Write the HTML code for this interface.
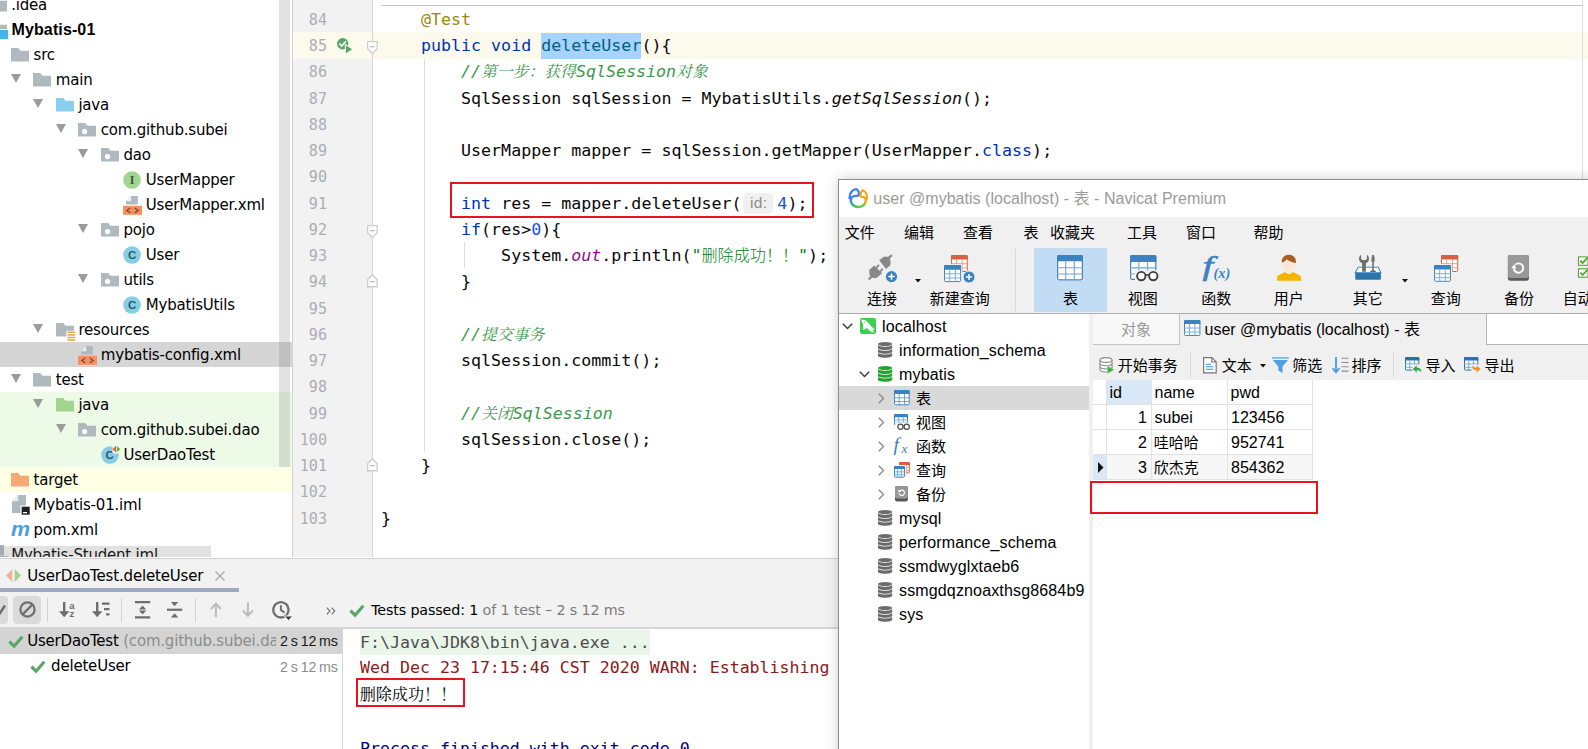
<!DOCTYPE html>
<html lang="zh"><head><meta charset="utf-8"><title>IDEA + Navicat</title>
<style>
html,body{margin:0;padding:0}
body{width:1588px;height:749px;overflow:hidden;position:relative;background:#fff;color:#000;
 font-family:"Liberation Sans","Noto Sans CJK SC",sans-serif;font-size:16px}
.abs{position:absolute}
svg{position:absolute;overflow:visible}
#tree{position:absolute;left:0;top:0;width:293px;height:557px;overflow:hidden;background:#fff}
.tr{position:absolute;left:0;width:291.500px;height:25px;line-height:25px;white-space:nowrap;font-family:"DejaVu Sans","Liberation Sans","Noto Sans CJK SC",sans-serif;font-size:15px;letter-spacing:-.2px}
.tr span{position:absolute;top:1.1px}
.ar{position:absolute;width:0;height:0;border-left:5.600px solid transparent;border-right:5.600px solid transparent;border-top:9.600px solid #9b9b9b;top:6.900px}
#ed{position:absolute;left:293px;top:0;width:1295px;height:557px;overflow:hidden;background:#fff}
#gut{position:absolute;left:0;top:0;width:79px;height:558px;background:#f2f2f2;border-right:1px solid #d6d6d6}
.ln{position:absolute;left:0;width:34px;font-size:15.1px;text-align:right;color:#adadb5;height:26.26px;line-height:26.26px}
.cl{position:absolute;left:87.9px;height:26.26px;line-height:26.26px;white-space:pre;color:#080808}
.mono{font-family:"DejaVu Sans Mono","Liberation Mono","Noto Sans CJK SC",monospace;font-size:16.65px}
.kw{color:#0033b3}.an{color:#9e880d}.cm{color:#3a9a4a;font-style:italic}.st{color:#067d17}.nu{color:#1750eb}
.sf{color:#871094;font-style:italic}.it{font-style:italic}
.sel{background:#a6d2ff;color:#00627a;display:inline-block;height:26.26px}
.cjk{font-family:"Noto Serif CJK SC","Noto Sans CJK SC",serif;font-size:15.8px;line-height:1px}
.cjs{font-family:"Noto Sans CJK SC",sans-serif;font-size:16.1px;font-weight:300;line-height:1px}
.hint{display:inline-block;font-family:"Liberation Sans",sans-serif;font-size:15.5px;letter-spacing:.3px;color:#8c8c8c;background:#f0f0f0;border-radius:4.5px;height:21px;line-height:20px;padding:0 6.2px 0 6.6px;margin:0 4px 0 1.8px;vertical-align:.5px;width:17.2px}
#bot{position:absolute;left:0;width:1588px;height:192px;overflow:hidden}
#nav{position:absolute;width:760px;height:580px;border:1px solid #8c8c8c;box-sizing:border-box;box-shadow:0 0 12px rgba(0,0,0,.2);overflow:hidden;background:#fff;font-family:"Liberation Sans","Noto Sans CJK SC",sans-serif}

</style></head><body>
<div id="tree">
<div class="tr" style="top:-8px;"><svg width="18" height="14" viewBox="0 0 18 14" style="left:-11.4px;top:5.5px"><path d="M0 0h7.2l2.3 2.8h8.5v10.7h-18z" fill="#aeb9c0"/></svg><span style="left:11.2px;">.idea</span></div>
<div class="tr" style="top:17px;"><svg width="18" height="16" viewBox="0 0 18 16" style="left:-11.4px;top:5px"><path d="M0 0h7.2l2.3 2.8h8.5v10.7h-18z" fill="#aeb9c0"/><rect x="9" y="7" width="10" height="10" fill="#fff"/><rect x="10" y="8" width="9" height="9" fill="#3fb6e8"/></svg><span style="left:11.2px;font:bold 16px/25px Liberation Sans,sans-serif;letter-spacing:.12px;left:11.500px;top:0;">Mybatis-01</span></div>
<div class="tr" style="top:42px;"><svg width="18" height="14" viewBox="0 0 18 14" style="left:11.0px;top:5.5px"><path d="M0 0h7.2l2.3 2.8h8.5v10.7h-18z" fill="#aeb9c0"/></svg><span style="left:33.6px;">src</span></div>
<div class="tr" style="top:67px;"><i class="ar" style="left:10.5px"></i><svg width="18" height="14" viewBox="0 0 18 14" style="left:33.2px;top:5.5px"><path d="M0 0h7.2l2.3 2.8h8.5v10.7h-18z" fill="#aeb9c0"/></svg><span style="left:55.8px;">main</span></div>
<div class="tr" style="top:92px;"><i class="ar" style="left:33.1px"></i><svg width="18" height="14" viewBox="0 0 18 14" style="left:55.8px;top:5.5px"><path d="M0 0h7.2l2.3 2.8h8.5v10.7h-18z" fill="#87d0f0"/></svg><span style="left:78.4px;">java</span></div>
<div class="tr" style="top:117px;"><i class="ar" style="left:55.5px"></i><svg width="18" height="14" viewBox="0 0 18 14" style="left:78.2px;top:5.5px"><path d="M0 0h7.2l2.3 2.8h8.5v10.7h-18z" fill="#aeb9c0"/><circle cx="6.6" cy="8.6" r="2.6" fill="#fff"/></svg><span style="left:100.8px;">com.github.subei</span></div>
<div class="tr" style="top:142px;"><i class="ar" style="left:78.1px"></i><svg width="18" height="14" viewBox="0 0 18 14" style="left:100.8px;top:5.5px"><path d="M0 0h7.2l2.3 2.8h8.5v10.7h-18z" fill="#aeb9c0"/><circle cx="6.6" cy="8.6" r="2.6" fill="#fff"/></svg><span style="left:123.4px;">dao</span></div>
<div class="tr" style="top:167px;"><svg width="18" height="18" viewBox="0 0 18 18" style="left:123.2px;top:3.5px"><circle cx="9" cy="9" r="8.8" fill="#a2d592"/><text x="9" y="13.2" text-anchor="middle" font-family="Liberation Serif,serif" font-weight="bold" font-size="12" fill="#3d5a3c">I</text></svg><span style="left:145.8px;">UserMapper</span></div>
<div class="tr" style="top:192px;"><svg width="19" height="19" viewBox="0 0 19 19" style="left:123.2px;top:3.5px"><path d="M3 8.5V5.2L8.2 0H14.8V8.5z" fill="#aeb9c0"/><path d="M3 5.2L8.2 0V5.2z" fill="#fff" opacity=".75"/><rect x="0" y="9.8" width="19" height="9" fill="#f4905f"/><path d="M7.300 11.900L3.800 14.400l3.500 2.500M11.700 11.900l3.500 2.500-3.500 2.500" fill="none" stroke="#6b3a22" stroke-width="1.100"/></svg><span style="left:145.8px;">UserMapper.xml</span></div>
<div class="tr" style="top:217px;"><i class="ar" style="left:78.1px"></i><svg width="18" height="14" viewBox="0 0 18 14" style="left:100.8px;top:5.5px"><path d="M0 0h7.2l2.3 2.8h8.5v10.7h-18z" fill="#aeb9c0"/><circle cx="6.6" cy="8.6" r="2.6" fill="#fff"/></svg><span style="left:123.4px;">pojo</span></div>
<div class="tr" style="top:242px;"><svg width="18" height="18" viewBox="0 0 18 18" style="left:123.2px;top:3.5px"><circle cx="9" cy="9" r="8.8" fill="#86cde6"/><text x="9" y="13" text-anchor="middle" font-family="Liberation Sans,sans-serif" font-weight="bold" font-size="11.5" fill="#2f5a6c">C</text></svg><span style="left:145.8px;">User</span></div>
<div class="tr" style="top:267px;"><i class="ar" style="left:78.1px"></i><svg width="18" height="14" viewBox="0 0 18 14" style="left:100.8px;top:5.5px"><path d="M0 0h7.2l2.3 2.8h8.5v10.7h-18z" fill="#aeb9c0"/><circle cx="6.6" cy="8.6" r="2.6" fill="#fff"/></svg><span style="left:123.4px;">utils</span></div>
<div class="tr" style="top:292px;"><svg width="18" height="18" viewBox="0 0 18 18" style="left:123.2px;top:3.5px"><circle cx="9" cy="9" r="8.8" fill="#86cde6"/><text x="9" y="13" text-anchor="middle" font-family="Liberation Sans,sans-serif" font-weight="bold" font-size="11.5" fill="#2f5a6c">C</text></svg><span style="left:145.8px;">MybatisUtils</span></div>
<div class="tr" style="top:317px;"><i class="ar" style="left:33.1px"></i><svg width="18" height="14" viewBox="0 0 18 14" style="left:55.8px;top:5.5px"><path d="M0 0h7.2l2.3 2.8h8.5v10.7h-18z" fill="#aeb9c0"/><rect x="10.400" y="7.800" width="9" height="10" fill="#fff"/><path d="M11.400 9.300h7.900M11.400 11.900h7.900M11.400 14.500h7.900M11.400 17.100h7.900" stroke="#e0a94a" stroke-width="1.500"/></svg><span style="left:78.4px;">resources</span></div>
<div class="tr" style="top:342px;background:#d5d5d5;"><svg width="19" height="19" viewBox="0 0 19 19" style="left:78.2px;top:3.5px"><path d="M3 8.5V5.2L8.2 0H14.8V8.5z" fill="#aeb9c0"/><path d="M3 5.2L8.2 0V5.2z" fill="#fff" opacity=".75"/><rect x="0" y="9.8" width="19" height="9" fill="#f4905f"/><path d="M7.300 11.900L3.800 14.400l3.500 2.500M11.700 11.900l3.500 2.500-3.500 2.500" fill="none" stroke="#6b3a22" stroke-width="1.100"/></svg><span style="left:100.8px;">mybatis-config.xml</span></div>
<div class="tr" style="top:367px;"><i class="ar" style="left:10.5px"></i><svg width="18" height="14" viewBox="0 0 18 14" style="left:33.2px;top:5.5px"><path d="M0 0h7.2l2.3 2.8h8.5v10.7h-18z" fill="#aeb9c0"/></svg><span style="left:55.8px;">test</span></div>
<div class="tr" style="top:392px;background:#eefae8;"><i class="ar" style="left:33.1px"></i><svg width="18" height="14" viewBox="0 0 18 14" style="left:55.8px;top:5.5px"><path d="M0 0h7.2l2.3 2.8h8.5v10.7h-18z" fill="#a3d48e"/></svg><span style="left:78.4px;">java</span></div>
<div class="tr" style="top:417px;background:#eefae8;"><i class="ar" style="left:55.5px"></i><svg width="18" height="14" viewBox="0 0 18 14" style="left:78.2px;top:5.5px"><path d="M0 0h7.2l2.3 2.8h8.5v10.7h-18z" fill="#aeb9c0"/><circle cx="6.6" cy="8.6" r="2.6" fill="#fff"/></svg><span style="left:100.8px;">com.github.subei.dao</span></div>
<div class="tr" style="top:442px;background:#eefae8;"><svg width="20" height="19" viewBox="0 0 20 19" style="left:100.8px;top:2.5px"><circle cx="9" cy="10" r="8.8" fill="#86cde6"/><text x="8.6" y="14" text-anchor="middle" font-family="Liberation Sans,sans-serif" font-weight="bold" font-size="11.5" fill="#2f5a6c">C</text><path d="M11.5 0.5h6.5v8h-6.5z" fill="#fff"/><path d="M15.6 0.8l3.8 3.4-3.8 3.4z" fill="#62b543"/><path d="M15 0.8l-3.8 3.4 3.8 3.4z" fill="#e8673c"/></svg><span style="left:123.4px;">UserDaoTest</span></div>
<div class="tr" style="top:467px;background:#ffffe6;"><svg width="18" height="14" viewBox="0 0 18 14" style="left:11.0px;top:5.5px"><path d="M0 0h7.2l2.3 2.8h8.5v10.7h-18z" fill="#f6a972"/></svg><span style="left:33.6px;">target</span></div>
<div class="tr" style="top:492px;"><svg width="19" height="20" viewBox="0 0 19 20" style="left:11.0px;top:2.5px"><path d="M1 18V6.2L7.2 0H15V18z" fill="#aeb9c0"/><path d="M1 6.2L7.2 0V6.2z" fill="#fff" opacity=".7"/><rect x="9.5" y="10.5" width="9.5" height="9.5" fill="#fff"/><rect x="10.7" y="11.7" width="8" height="8" fill="#1f1f1f"/><rect x="12" y="17" width="4" height="1.3" fill="#fff"/></svg><span style="left:33.6px;">Mybatis-01.iml</span></div>
<div class="tr" style="top:517px;"><span style="left:11.0px;top:-1px;font:italic bold 21px/25px 'Liberation Sans',sans-serif;color:#4a9fdc;transform:scaleX(1.02);transform-origin:left">m</span><span style="left:33.6px;">pom.xml</span></div>
<div class="tr" style="top:542px;"><svg width="19" height="20" viewBox="0 0 19 20" style="left:-11.4px;top:2.5px"><path d="M1 18V6.2L7.2 0H15V18z" fill="#aeb9c0"/><path d="M1 6.2L7.2 0V6.2z" fill="#fff" opacity=".7"/><rect x="9.5" y="10.5" width="9.5" height="9.5" fill="#fff"/><rect x="10.7" y="11.7" width="8" height="8" fill="#1f1f1f"/><rect x="12" y="17" width="4" height="1.3" fill="#fff"/></svg><span style="left:11.2px;">Mybatis-Student.iml</span></div>
<div class="abs" style="left:279px;top:-5px;width:10.900px;height:472px;background:rgba(110,110,110,.2)"></div>
<div class="abs" style="left:291.700px;top:0;width:1.300px;height:558px;background:#d2d2d2"></div>
<div class="abs" style="left:0;top:545.5px;width:211px;height:11.5px;background:rgba(120,120,120,.22)"></div>
</div>
<div id="ed" class="mono">
<div class="abs" style="left:0;top:32px;width:1295px;height:26.5px;background:#fcfaed"></div>
<div id="gut"></div>
<div class="abs" style="left:0;top:32px;width:79px;height:26.5px;background:#fcfaed"></div>
<div class="abs" style="left:88px;top:4.5px;width:1201px;height:1.3px;background:#c4c4c4"></div>
<div class="abs" style="left:1288.5px;top:0;width:1.2px;height:180px;background:#dcdcdc"></div>
<div class="abs" style="left:131.2px;top:58.5px;width:1.2px;height:393.7px;background:#dedede"></div>
<div class="abs" style="left:171.2px;top:242.1px;width:1.2px;height:26.3px;background:#dedede"></div>
<div class="ln" style="top:6.74px">84</div>
<div class="cl" style="top:6.74px">    <span class="an">@Test</span></div>
<div class="ln" style="top:33.00px">85</div>
<div class="cl" style="top:33.00px">    <span class="kw">public void</span> <span class="sel">deleteUser</span>(){</div>
<div class="ln" style="top:59.26px">86</div>
<div class="cl" style="top:59.26px">        <span class="cm">//<span class="cjk">第一步：获得</span>SqlSession<span class="cjk">对象</span></span></div>
<div class="ln" style="top:85.52px">87</div>
<div class="cl" style="top:85.52px">        SqlSession sqlSession = MybatisUtils.<span class="it">getSqlSession</span>();</div>
<div class="ln" style="top:111.78px">88</div>
<div class="ln" style="top:138.04px">89</div>
<div class="cl" style="top:138.04px">        UserMapper mapper = sqlSession.getMapper(UserMapper.<span class="kw">class</span>);</div>
<div class="ln" style="top:164.30px">90</div>
<div class="ln" style="top:190.56px">91</div>
<div class="cl" style="top:190.56px">        <span class="kw">int</span> res = mapper.deleteUser(<span class="hint">id:</span><span class="nu">4</span>);</div>
<div class="ln" style="top:216.82px">92</div>
<div class="cl" style="top:216.82px">        <span class="kw">if</span>(res&gt;<span class="nu">0</span>){</div>
<div class="ln" style="top:243.08px">93</div>
<div class="cl" style="top:243.08px">            System.<span class="sf">out</span>.println(<span class="st">"<span class="cjs">删除成功！！</span>"</span>);</div>
<div class="ln" style="top:269.34px">94</div>
<div class="cl" style="top:269.34px">        }</div>
<div class="ln" style="top:295.60px">95</div>
<div class="ln" style="top:321.86px">96</div>
<div class="cl" style="top:321.86px">        <span class="cm">//<span class="cjk">提交事务</span></span></div>
<div class="ln" style="top:348.12px">97</div>
<div class="cl" style="top:348.12px">        sqlSession.commit();</div>
<div class="ln" style="top:374.38px">98</div>
<div class="ln" style="top:400.64px">99</div>
<div class="cl" style="top:400.64px">        <span class="cm">//<span class="cjk">关闭</span>SqlSession</span></div>
<div class="ln" style="top:426.90px">100</div>
<div class="cl" style="top:426.90px">        sqlSession.close();</div>
<div class="ln" style="top:453.16px">101</div>
<div class="cl" style="top:453.16px">    }</div>
<div class="ln" style="top:479.42px">102</div>
<div class="ln" style="top:505.68px">103</div>
<div class="cl" style="top:505.68px">}</div>
<svg width="16" height="16" viewBox="0 0 16 16" style="left:43.9px;top:37.7px"><circle cx="5.700" cy="5.700" r="5.700" fill="#59a869"/><path d="M2.300 5.500l2.400 2.500 4.300-4.600" fill="none" stroke="#fff" stroke-width="1.700"/><path d="M7.800 5.800v10.400l8.400-5.200z" fill="#fcfaed"/><path d="M8.900 7.400v7.800l6.300-3.900z" fill="#59a869"/></svg>
<svg width="11" height="14" viewBox="0 0 11 14" style="left:74.1px;top:40.8px"><path d="M.65 .65h9.500v7l-4.750 5-4.750-5z" fill="#fff" stroke="#cdcdcd" stroke-width="1.300"/><path d="M3 5.700h4.800" stroke="#b0b0b0" stroke-width="1.100"/></svg>
<svg width="11" height="14" viewBox="0 0 11 14" style="left:74.1px;top:225.0px"><path d="M.65 .65h9.500v7l-4.750 5-4.750-5z" fill="#fff" stroke="#cdcdcd" stroke-width="1.300"/><path d="M3 5.700h4.800" stroke="#b0b0b0" stroke-width="1.100"/></svg>
<svg width="11" height="14" viewBox="0 0 11 14" style="left:74.1px;top:274.0px"><path d="M.65 12.750h9.500v-7l-4.750-5-4.750 5z" fill="#fff" stroke="#cdcdcd" stroke-width="1.300"/><path d="M3 7.700h4.800" stroke="#b0b0b0" stroke-width="1.100"/></svg>
<svg width="11" height="14" viewBox="0 0 11 14" style="left:74.1px;top:457.9px"><path d="M.65 12.750h9.500v-7l-4.750-5-4.750 5z" fill="#fff" stroke="#cdcdcd" stroke-width="1.300"/><path d="M3 7.700h4.800" stroke="#b0b0b0" stroke-width="1.100"/></svg>
<div class="abs" style="left:157px;top:181.900px;width:360px;height:32.600px;border:2px solid #e8141f"></div>
</div>
<div id="bot" style="top:558px">
<div class="abs" style="left:0.0px;top:-0.3px;width:1588.0px;height:70.0px;background:#f2f2f2"></div>
<div class="abs" style="left:0.0px;top:0.0px;width:1588.0px;height:1.1px;background:#d2d2d2"></div>
<svg width="15" height="13" viewBox="0 0 15 13" style="left:5.8px;top:11.0px"><path d="M6.3 0v13L0 6.500z" fill="#f2b197"/><path d="M8.700 0v13L15 6.500z" fill="#a5d38f"/></svg>
<div class="abs " style="left:27.2px;top:4.6px;height:26px;line-height:26px;font-size:15px;color:#000;white-space:pre;font-family:'DejaVu Sans','Liberation Sans',sans-serif;letter-spacing:-.17px;">UserDaoTest.deleteUser</div>
<svg width="10" height="10" viewBox="0 0 10 10" style="left:215.0px;top:13.0px"><path d="M.5 .5l9 9M9.500 .5l-9 9" stroke="#a6a6a6" stroke-width="1.200"/></svg>
<div class="abs" style="left:0.0px;top:30.3px;width:238.5px;height:3.6px;background:#9da8c3"></div>
<div class="abs" style="left:-6.0px;top:38.0px;width:14.2px;height:27.8px;border-radius:4px;background:#dadada"></div>
<svg width="8" height="12" viewBox="0 0 8 12" style="left:0.0px;top:45.0px"><path d="M-3 7l3 3 5-7.500" fill="none" stroke="#6e6e6e" stroke-width="2.600"/></svg>
<div class="abs" style="left:13.2px;top:38.0px;width:27.7px;height:27.8px;border-radius:4.500px;background:#dadada"></div>
<svg width="17" height="17" viewBox="0 0 17 17" style="left:18.6px;top:43.4px"><circle cx="8.500" cy="8.500" r="7.100" fill="none" stroke="#6e6e6e" stroke-width="2.200"/><path d="M3.600 13.400L13.400 3.600" stroke="#6e6e6e" stroke-width="2.200"/></svg>
<div class="abs" style="left:47.0px;top:40.2px;width:1.2px;height:23.5px;background:#d2d2d2"></div>
<svg width="18" height="16" viewBox="0 0 18 16" style="left:59.3px;top:44.0px"><path d="M5.200 0v10.500" stroke="#6e6e6e" stroke-width="2.400"/><path d="M0 9.300h10.400L5.200 15.200z" fill="#6e6e6e"/><text x="10.300" y="6.700" font-family="Liberation Sans,sans-serif" font-weight="bold" font-size="9.500" fill="#6e6e6e">a</text><text x="10.600" y="15.200" font-family="Liberation Sans,sans-serif" font-weight="bold" font-size="9.500" fill="#6e6e6e">z</text></svg>
<svg width="18" height="16" viewBox="0 0 18 16" style="left:92.3px;top:44.0px"><path d="M5.200 0v10.500" stroke="#6e6e6e" stroke-width="2.400"/><path d="M0 9.300h10.400L5.200 15.200z" fill="#6e6e6e"/><path d="M10 1.600h7.500M12 7.200h5.500M14.100 12.400h3.400" stroke="#6e6e6e" stroke-width="2.300"/></svg>
<div class="abs" style="left:120.8px;top:40.2px;width:1.2px;height:23.5px;background:#d2d2d2"></div>
<svg width="15.2" height="17.5" viewBox="0 0 15.2 17.5" style="left:134.5px;top:43.2px"><path d="M0 1.100h15.200M0 16.400h15.200" stroke="#6e6e6e" stroke-width="2.200"/><path d="M3.900 8.400l3.700-3.900 3.700 3.900zM3.900 9.600l3.700 3.900 3.700-3.900z" fill="#6e6e6e"/></svg>
<svg width="15.2" height="17.5" viewBox="0 0 15.2 17.5" style="left:167.4px;top:43.2px"><path d="M0 8.750h15.200" stroke="#6e6e6e" stroke-width="2.200"/><path d="M3.900 1.100l3.700 4.100 3.700-4.100zM3.900 16.400l3.700-4.100 3.700 4.100z" fill="#6e6e6e"/></svg>
<div class="abs" style="left:195.0px;top:40.2px;width:1.2px;height:23.5px;background:#d2d2d2"></div>
<svg width="12" height="15.5" viewBox="0 0 12 15.5" style="left:210.0px;top:44.4px"><path d="M5.900 15.200V1.800M.8 6.900l5.100-5.100L11 6.900" fill="none" stroke="#bdbdbd" stroke-width="2.100"/></svg>
<svg width="12" height="15.5" viewBox="0 0 12 15.5" style="left:242.1px;top:44.4px"><path d="M5.900 .3v13.400M.8 8.600l5.100 5.100L11 8.600" fill="none" stroke="#bdbdbd" stroke-width="2.100"/></svg>
<svg width="20" height="20" viewBox="0 0 20 20" style="left:272.0px;top:43.4px"><circle cx="8.900" cy="8.800" r="7.700" fill="none" stroke="#6e6e6e" stroke-width="2.300"/><path d="M8.900 4.200v4.800l3.600 2.600" fill="none" stroke="#6e6e6e" stroke-width="2"/><path d="M12.400 15h8.200l-4.100 4.600z" fill="#3a3a3a" stroke="#f2f2f2" stroke-width="1"/></svg>
<svg width="10" height="8" viewBox="0 0 10 8" style="left:326.4px;top:48.6px"><path d="M.8 .6l3.200 3.400L.8 7.400M5.600 .6l3.200 3.400-3.200 3.400" fill="none" stroke="#6e6e6e" stroke-width="1.100"/></svg>
<svg width="16" height="13" viewBox="0 0 16 13" style="left:348.5px;top:45.6px"><path d="M1.400 6.600l4.700 4.600L14.300 1.700" fill="none" stroke="#59a869" stroke-width="3.200"/></svg>
<div class="abs " style="left:371.2px;top:38.5px;height:26px;line-height:26px;font-size:14.3px;color:#000;white-space:pre;font-family:'DejaVu Sans','Liberation Sans',sans-serif;letter-spacing:-.15px;">Tests passed: 1 <span style="color:#7b7b7b">of 1 test – 2 s 12 ms</span></div>
<div class="abs" style="left:0.0px;top:69.2px;width:1588.0px;height:125.0px;background:#fff"></div>
<div class="abs" style="left:0.0px;top:69.0px;width:1588.0px;height:1.8px;background:#d6d6d6"></div>
<div class="abs" style="left:0.0px;top:69.2px;width:341.8px;height:26.6px;background:#d4d4d4"></div>
<svg width="16" height="13" viewBox="0 0 16 13" style="left:7.6px;top:76.8px"><path d="M1.400 6.600l4.700 4.600L14.300 1.700" fill="none" stroke="#59a869" stroke-width="3.200"/></svg>
<svg width="16" height="13" viewBox="0 0 16 13" style="left:29.6px;top:102.0px"><path d="M1.400 6.600l4.700 4.600L14.300 1.700" fill="none" stroke="#59a869" stroke-width="3.200"/></svg>
<div class="abs " style="left:27.2px;top:70.3px;height:26px;line-height:26px;font-size:15px;color:#000;white-space:pre;font-family:'DejaVu Sans','Liberation Sans',sans-serif;width:248.700px;overflow:hidden;letter-spacing:-.2px;">UserDaoTest <span style="color:#8c8c8c">(com.github.subei.dao)</span></div>
<div class="abs " style="left:240.0px;top:69.8px;height:26px;line-height:26px;font-size:14.2px;color:#1a1a1a;white-space:pre;word-spacing:-.9px;letter-spacing:-.12px;width:97.8px;text-align:right;">2 s 12 ms</div>
<div class="abs " style="left:51.1px;top:95.0px;height:26px;line-height:26px;font-size:15px;color:#000;white-space:pre;font-family:'DejaVu Sans','Liberation Sans',sans-serif;letter-spacing:-.2px;">deleteUser</div>
<div class="abs " style="left:240.0px;top:95.8px;height:26px;line-height:26px;font-size:14.2px;color:#8c8c8c;white-space:pre;word-spacing:-.9px;letter-spacing:-.12px;width:97.8px;text-align:right;">2 s 12 ms</div>
<div class="abs" style="left:341.8px;top:69.2px;width:1.3px;height:125.0px;background:#d4d4d4"></div>
<div class="abs mono" style="left:360.0px;top:71.0px;height:26px;line-height:26px;font-size:16.6px;color:#4d4d4d;white-space:pre;background:#ebf6ea;height:25px;line-height:25px;margin-top:.500px;">F:\Java\JDK8\bin\java.exe ...</div>
<div class="abs mono" style="left:360.0px;top:97.4px;height:26px;line-height:26px;font-size:16.6px;color:#8b1a1a;white-space:pre;">Wed Dec 23 17:15:46 CST 2020 WARN: Establishing SSL connection</div>
<div class="abs " style="left:359.7px;top:122.4px;height:26px;line-height:26px;font-size:16.1px;color:#000;white-space:pre;font-family:'Noto Serif CJK SC','Noto Sans CJK SC',serif;">删除成功！！</div>
<div class="abs mono" style="left:360.0px;top:178.1px;height:26px;line-height:26px;font-size:16.6px;color:#00007f;white-space:pre;">Process finished with exit code 0</div>
<div class="abs" style="left:356.2px;top:119.9px;width:104.8px;height:25.5px;border:2px solid #e8141f"></div>
</div>
<div id="nav" style="left:838px;top:179px">
<div class="abs " style="left:0.0px;top:0.0px;width:760.0px;height:36.8px;background:#fff"></div>
<svg width="22" height="22" viewBox="847 187 22 22" style="left:8.0px;top:7.0px"><defs><linearGradient id="ngl" x1="0" y1="0" x2="0" y2="1"><stop offset="0" stop-color="#3b7df6"/><stop offset=".45" stop-color="#3b8ee0"/><stop offset="1" stop-color="#3fd23f"/></linearGradient><linearGradient id="ngr" x1="0" y1="0" x2="0" y2="1"><stop offset="0" stop-color="#fba40f"/><stop offset=".45" stop-color="#d8b41e"/><stop offset="1" stop-color="#3fd23f"/></linearGradient></defs><path d="M858.2 207A7.400 6.300 0 0 1 851.600 198" fill="none" stroke="url(#ngl)" stroke-width="2.300"/><path d="M858.2 207A7.400 6.300 0 0 0 865.300 198.500" fill="none" stroke="url(#ngr)" stroke-width="2.300"/><path d="M849.500 198.200C849.100 192.800 852.800 189.200 856.400 189.200C858.400 190.500 859.300 193 858.500 195.600C854.700 195.500 851.600 196.800 849.500 198.200z" fill="#fff" stroke="#3b7df6" stroke-width="2.200" stroke-linejoin="round"/><path d="M860.600 194C861 191.800 862 190.500 863.100 190.400C865.800 191.600 867.400 195.300 866.900 198.800C865 197.400 862.700 196.600 860.600 196.300z" fill="#fff" stroke="#fba40f" stroke-width="2.200" stroke-linejoin="round"/></svg>
<div class="abs" style="left:34.3px;top:6.7px;height:24px;line-height:24px;font-size:16px;color:#9b9b9b;white-space:nowrap;letter-spacing:.03px;">user @mybatis (localhost) - 表 - Navicat Premium</div>
<div class="abs " style="left:0.0px;top:36.8px;width:760.0px;height:96.4px;background:#f0f0f0"></div>
<div class="abs" style="left:5.7px;top:41.3px;height:24px;line-height:24px;font-size:15px;color:#000;white-space:nowrap;">文件</div>
<div class="abs" style="left:65.0px;top:41.3px;height:24px;line-height:24px;font-size:15px;color:#000;white-space:nowrap;">编辑</div>
<div class="abs" style="left:124.0px;top:41.3px;height:24px;line-height:24px;font-size:15px;color:#000;white-space:nowrap;">查看</div>
<div class="abs" style="left:184.5px;top:41.3px;height:24px;line-height:24px;font-size:15px;color:#000;white-space:nowrap;">表</div>
<div class="abs" style="left:211.0px;top:41.3px;height:24px;line-height:24px;font-size:15px;color:#000;white-space:nowrap;">收藏夹</div>
<div class="abs" style="left:288.0px;top:41.3px;height:24px;line-height:24px;font-size:15px;color:#000;white-space:nowrap;">工具</div>
<div class="abs" style="left:347.0px;top:41.3px;height:24px;line-height:24px;font-size:15px;color:#000;white-space:nowrap;">窗口</div>
<div class="abs" style="left:414.5px;top:41.3px;height:24px;line-height:24px;font-size:15px;color:#000;white-space:nowrap;">帮助</div>
<div class="abs " style="left:195.2px;top:67.8px;width:72.7px;height:63.8px;background:#c1dcf3"></div>
<div class="abs " style="left:176.0px;top:69.0px;width:1.2px;height:61.5px;background:#dadada"></div>
<div class="abs" style="left:3.0px;top:106.8px;height:24px;line-height:24px;font-size:15px;color:#000;white-space:nowrap;width:80px;text-align:center;">连接</div>
<div class="abs" style="left:80.8px;top:106.8px;height:24px;line-height:24px;font-size:15px;color:#000;white-space:nowrap;width:80px;text-align:center;">新建查询</div>
<div class="abs" style="left:191.5px;top:106.8px;height:24px;line-height:24px;font-size:15px;color:#000;white-space:nowrap;width:80px;text-align:center;">表</div>
<div class="abs" style="left:263.8px;top:106.8px;height:24px;line-height:24px;font-size:15px;color:#000;white-space:nowrap;width:80px;text-align:center;">视图</div>
<div class="abs" style="left:337.2px;top:106.8px;height:24px;line-height:24px;font-size:15px;color:#000;white-space:nowrap;width:80px;text-align:center;">函数</div>
<div class="abs" style="left:409.7px;top:106.8px;height:24px;line-height:24px;font-size:15px;color:#000;white-space:nowrap;width:80px;text-align:center;">用户</div>
<div class="abs" style="left:488.7px;top:106.8px;height:24px;line-height:24px;font-size:15px;color:#000;white-space:nowrap;width:80px;text-align:center;">其它</div>
<div class="abs" style="left:566.8px;top:106.8px;height:24px;line-height:24px;font-size:15px;color:#000;white-space:nowrap;width:80px;text-align:center;">查询</div>
<div class="abs" style="left:639.9px;top:106.8px;height:24px;line-height:24px;font-size:15px;color:#000;white-space:nowrap;width:80px;text-align:center;">备份</div>
<div class="abs" style="left:723.8px;top:106.8px;height:24px;line-height:24px;font-size:15px;color:#000;white-space:nowrap;">自动运行</div>
<svg width="6" height="4" viewBox="0 0 6 4" style="left:76.4px;top:98.8px"><path d="M0 0h6L3 3.6z" fill="#111"/></svg>
<svg width="6" height="4" viewBox="0 0 6 4" style="left:562.6px;top:98.8px"><path d="M0 0h6L3 3.6z" fill="#111"/></svg>
<svg width="32" height="30" viewBox="866 254 32 30" style="left:27.0px;top:74.0px"><g fill="#888"><path d="M879.2 260.3L883.4 256.9Q887.5 255.6 889.9 258.6Q891.3 262.3 890.3 265.2L886 269z"/><path d="M887.6 257.2L891.2 254.3L892.7 256.1L889.1 259z"/><path d="M874.3 265.6L882.1 273.3L877.2 277.6Q873.6 278.9 870.8 277.1Q868.6 274 869.3 269.8z"/><path d="M875.9 267.3L878.2 264.2L879.7 265.3L877.4 268.500zM879.6 271L882 268L883.400 269.1L881.1 272.200z"/><path d="M871.400 275.3L867.9 278.8L869.400 280.3L872.9 276.8z"/></g><circle cx="891.5" cy="276.6" r="5.6" fill="#3a82bc"/><path d="M888.4 276.6h6.2M891.5 273.500v6.2" stroke="#fff" stroke-width="1.500"/></svg>
<svg width="16.8" height="17" viewBox="0 0 16.8 17" style="left:112.2px;top:74.9px"><rect x="0" y="0" width="16.8" height="17" rx="1" fill="#fff"/><path d="M0 1Q0 0 1 0H15.8Q16.8 0 16.8 1V4.5H0z" fill="#d95f43"/><rect x="0.5" y="0.5" width="15.8" height="16" rx="1" fill="none" stroke="#d95f43" stroke-width="1"/><path d="M0 8.7H16.8M0 12.8H16.8M5.6 4.5V17M11.2 4.5V17" stroke="#ee9478" stroke-width="0.9" fill="none"/></svg>
<svg width="17.1" height="17.1" viewBox="0 0 17.1 17.1" style="left:105.1px;top:85.0px"><rect x="-1" y="-1" width="19.100" height="19.100" rx="2" fill="#f0f0f0"/><rect x="0" y="0" width="17.1" height="17.1" rx="1" fill="#fff"/><path d="M0 1Q0 0 1 0H16.1Q17.1 0 17.1 1V4.7H0z" fill="#3b82c0"/><rect x="0.5" y="0.5" width="16.1" height="16.1" rx="1" fill="none" stroke="#3b82c0" stroke-width="1"/><path d="M0 8.8H17.1M0 13.0H17.1M5.7 4.7V17.1M11.4 4.7V17.1" stroke="#6ea6d6" stroke-width="0.9" fill="none"/></svg>
<svg width="12" height="12" viewBox="0 0 12 12" style="left:124.4px;top:91.4px"><circle cx="6" cy="6" r="5.900" fill="#3a82bc" stroke="#f0f0f0" stroke-width=".8"/><path d="M2.900 6h6.200M6 2.900v6.200" stroke="#fff" stroke-width="1.500"/></svg>
<svg width="26" height="25.4" viewBox="0 0 26 25.4" style="left:218.0px;top:74.8px"><rect x="0" y="0" width="26" height="25.4" rx="1.5" fill="#fff"/><path d="M0 1.5Q0 0 1.5 0H24.5Q26 0 26 1.5V6.3H0z" fill="#3b82c0"/><rect x="0.6" y="0.6" width="24.8" height="24.2" rx="1.5" fill="none" stroke="#3b82c0" stroke-width="1.2"/><path d="M0 12.7H26M0 19.0H26M8.7 6.3V25.4M17.3 6.3V25.4" stroke="#6ea6d6" stroke-width="1.1" fill="none"/></svg>
<svg width="28" height="26" viewBox="0 0 28 26" style="left:290.8px;top:74.9px"><rect x="0" y="0" width="26.4" height="25" rx="1.5" fill="#fff"/><path d="M0 1.5Q0 0 1.5 0H24.9Q26.4 0 26.4 1.5V6.9H0z" fill="#3b82c0"/><rect x="0.6" y="0.6" width="25.2" height="23.8" rx="1.5" fill="none" stroke="#3b82c0" stroke-width="1.2"/><path d="M0 12.9H26.4M0 19.0H26.4M8.8 6.9V25M17.6 6.9V25" stroke="#6ea6d6" stroke-width="1.1" fill="none"/><rect x="5" y="15.300" width="24" height="12" fill="#f0f0f0"/><circle cx="11.300" cy="21.100" r="4.200" fill="#fff" stroke="#3f3f3f" stroke-width="1.900"/><circle cx="23.300" cy="21.100" r="4.200" fill="#fff" stroke="#3f3f3f" stroke-width="1.900"/><path d="M15.400 20.300q1.900-.9 3.800 0" fill="none" stroke="#3f3f3f" stroke-width="1.500"/></svg>
<svg width="32" height="32" viewBox="1200 252 32 32" style="left:361.0px;top:72.0px"><text transform="translate(1202.600,275.400) scale(1.45,1)" font-family="Liberation Serif,serif" font-style="italic" font-size="26.900" fill="#3a82c4" stroke="#3a82c4" stroke-width=".55">f</text><text x="1213.400" y="277.700" font-family="Liberation Serif,serif" font-style="italic" font-weight="bold" font-size="14.500" fill="#3a82c4">(x)</text></svg>
<svg width="27" height="28" viewBox="1276 254 27 28" style="left:437.0px;top:74.0px"><path d="M1277.1 280.700V277.200Q1277.100 275.800 1279 274.900L1284.500 272.300H1293.500L1299 274.900Q1301.100 275.800 1301.100 277.200V280.700z" fill="#f3b600"/><path d="M1285.700 270.500h6.400v2.300l-3.200 1.500-3.200-1.500z" fill="#fdeee4"/><ellipse cx="1288.900" cy="264.600" rx="6.900" ry="7.800" fill="#fde6d8"/><path d="M1281.900 262.600C1281.300 257.900 1284.600 254.800 1288.900 254.800S1296.500 257.900 1295.900 263C1292.800 262.600 1289.400 261.300 1286.800 259.200C1285.700 260.800 1284 262 1281.900 262.600z" fill="#a85f24"/></svg>
<svg width="28" height="27" viewBox="1354 254 28 27" style="left:515.0px;top:74.0px"><path d="M1358.200 267.200H1378.300L1380.900 272.800H1355.200z" fill="#fff" stroke="#3f8fd6" stroke-width="1.100"/><g fill="#6e6e6e"><path d="M1362.100 271.700V263.300C1360.200 262.400 1359 260.700 1359 258.700C1359 257 1359.800 255.600 1361.100 254.700V258.900L1362.600 260H1365.400L1366.900 258.900V254.700C1368.200 255.600 1369 257 1369 258.700C1369 260.700 1367.800 262.400 1365.900 263.300V271.700z"/><path d="M1372.200 255.100H1373.900Q1375 258.500 1374.600 261.800H1373.800V270L1375.900 271V271.900H1370.200V271L1372.300 270V261.800H1371.500Q1371.100 258.500 1372.200 255.100z"/></g><path d="M1355.200 272.800H1380.900V278.800Q1380.900 279.800 1379.900 279.800H1356.200Q1355.200 279.800 1355.200 278.800z" fill="#2f74a8"/></svg>
<svg width="17.2" height="17" viewBox="0 0 17.2 17" style="left:601.9px;top:74.9px"><rect x="0" y="0" width="17.2" height="17" rx="1" fill="#fff"/><path d="M0 1Q0 0 1 0H16.2Q17.2 0 17.2 1V4.5H0z" fill="#d95f43"/><rect x="0.5" y="0.5" width="16.2" height="16" rx="1" fill="none" stroke="#d95f43" stroke-width="1"/><path d="M0 8.7H17.2M0 12.8H17.2M5.7 4.5V17M11.5 4.5V17" stroke="#ee9478" stroke-width="0.9" fill="none"/></svg>
<svg width="17" height="16.8" viewBox="0 0 17 16.8" style="left:595.0px;top:85.2px"><rect x="-1" y="-1" width="19" height="18.800" rx="2" fill="#f0f0f0"/><rect x="0" y="0" width="17" height="16.8" rx="1" fill="#fff"/><path d="M0 1Q0 0 1 0H16Q17 0 17 1V4.6H0z" fill="#3b82c0"/><rect x="0.5" y="0.5" width="16" height="15.8" rx="1" fill="none" stroke="#3b82c0" stroke-width="1"/><path d="M0 8.7H17M0 12.7H17M5.7 4.6V16.8M11.3 4.6V16.8" stroke="#6ea6d6" stroke-width="0.9" fill="none"/></svg>
<svg width="23" height="28" viewBox="1507 254 23 28" style="left:668.0px;top:74.0px"><rect x="1507.900" y="254.900" width="21" height="25.900" rx="2.200" fill="#5a5a5a"/><rect x="1507.900" y="254.900" width="21" height="23" rx="2.200" fill="#999"/><path d="M1513.800 268.300A4.700 4.700 0 1 0 1515.300 264.600" fill="none" stroke="#fff" stroke-width="1.900"/><path d="M1511.300 268.200L1516.500 268.200L1514.100 264.200z" fill="#fff"/></svg>
<svg width="12" height="23" viewBox="1578 256 12 23" style="left:739.0px;top:76.0px"><rect x="1578.500" y="256.900" width="9.500" height="8.400" fill="#fff" stroke="#5aa33a" stroke-width="1.100"/><path d="M1580.300 260.600l2.300 2.500 5-5.500" fill="none" stroke="#5aa33a" stroke-width="1.800"/><rect x="1578.500" y="268.800" width="9.500" height="8.400" fill="#fff" stroke="#5aa33a" stroke-width="1.100"/><path d="M1580.300 272.500l2.300 2.500 5-5.500" fill="none" stroke="#5aa33a" stroke-width="1.800"/></svg>
<div class="abs " style="left:0.0px;top:132.7px;width:760.0px;height:1.2px;background:#aeaeae"></div>
<div class="abs " style="left:0.0px;top:134.0px;width:250.0px;height:440.0px;background:#fff"></div>
<div class="abs " style="left:250.0px;top:134.0px;width:4.0px;height:440.0px;background:#f0f0f0"></div>
<div class="abs " style="left:0.0px;top:206.0px;width:250.0px;height:24.0px;background:#d9d9d9"></div>
<svg width="11" height="7" viewBox="0 0 11 7" style="left:3.0px;top:143.0px"><path d="M.8 .8l4.700 4.700L10.200.8" fill="none" stroke="#3c3c3c" stroke-width="1.500"/></svg>
<svg width="11" height="7" viewBox="0 0 11 7" style="left:19.5px;top:191.0px"><path d="M.8 .8l4.700 4.700L10.200.8" fill="none" stroke="#3c3c3c" stroke-width="1.500"/></svg>
<svg width="16" height="16" viewBox="860 318 16 16" style="left:21.0px;top:138.0px"><rect x="860" y="318" width="16" height="16" rx="2" fill="#3ecf4e"/><path d="M860.900 320.100C863.300 319.300 866.300 320.300 868.200 322.700C869.800 324.700 871.300 326.800 874.600 329.200L872.800 330.200L874.300 332.600C872.300 332.500 870.600 331.800 869.300 330.600C868 329.300 867.200 328.100 866.300 327.200L866 329.800L864.500 328.400L863.800 330.100C862.800 328.400 862.800 326.400 863.300 324.900C862.600 323.300 861.800 321.500 860.900 320.100z" fill="#fff"/><circle cx="864.300" cy="322.400" r=".6" fill="#3ecf4e"/></svg>
<div class="abs" style="left:43.0px;top:135.0px;height:24px;line-height:24px;font-size:16px;color:#000;white-space:nowrap;letter-spacing:.15px;">localhost</div>
<svg width="14.2" height="16" viewBox="0 0 14.2 16" style="left:39.0px;top:161.9px"><ellipse cx="7.1" cy="2" rx="7.1" ry="2" fill="#6b6b6b"/><path d="M0 2.8v3.1c0 1.100 3.200 2 7.1 2s7.1-.9 7.1-2v-3.1c0 1.100-3.200 2-7.1 2S0 3.9 0 2.8z" fill="#6b6b6b"/><path d="M0 6.7v3.1c0 1.100 3.200 2 7.1 2s7.1-.9 7.1-2v-3.1c0 1.100-3.200 2-7.1 2S0 7.800000000000001 0 6.7z" fill="#6b6b6b"/><path d="M0 10.6v3.1c0 1.100 3.200 2 7.1 2s7.1-.9 7.1-2v-3.1c0 1.100-3.200 2-7.1 2S0 11.7 0 10.6z" fill="#6b6b6b"/></svg>
<div class="abs" style="left:60.0px;top:159.0px;height:24px;line-height:24px;font-size:16px;color:#000;white-space:nowrap;letter-spacing:.15px;">information_schema</div>
<svg width="14.2" height="16" viewBox="0 0 14.2 16" style="left:39.0px;top:185.9px"><ellipse cx="7.1" cy="2" rx="7.1" ry="2" fill="#1fa52f"/><path d="M0 2.8v3.1c0 1.100 3.200 2 7.1 2s7.1-.9 7.1-2v-3.1c0 1.100-3.200 2-7.1 2S0 3.9 0 2.8z" fill="#1fa52f"/><path d="M0 6.7v3.1c0 1.100 3.200 2 7.1 2s7.1-.9 7.1-2v-3.1c0 1.100-3.200 2-7.1 2S0 7.800000000000001 0 6.7z" fill="#1fa52f"/><path d="M0 10.6v3.1c0 1.100 3.200 2 7.1 2s7.1-.9 7.1-2v-3.1c0 1.100-3.200 2-7.1 2S0 11.7 0 10.6z" fill="#1fa52f"/></svg>
<div class="abs" style="left:60.0px;top:183.0px;height:24px;line-height:24px;font-size:16px;color:#000;white-space:nowrap;letter-spacing:.15px;">mybatis</div>
<svg width="14.2" height="16" viewBox="0 0 14.2 16" style="left:39.0px;top:329.9px"><ellipse cx="7.1" cy="2" rx="7.1" ry="2" fill="#6b6b6b"/><path d="M0 2.8v3.1c0 1.100 3.200 2 7.1 2s7.1-.9 7.1-2v-3.1c0 1.100-3.200 2-7.1 2S0 3.9 0 2.8z" fill="#6b6b6b"/><path d="M0 6.7v3.1c0 1.100 3.200 2 7.1 2s7.1-.9 7.1-2v-3.1c0 1.100-3.200 2-7.1 2S0 7.800000000000001 0 6.7z" fill="#6b6b6b"/><path d="M0 10.6v3.1c0 1.100 3.200 2 7.1 2s7.1-.9 7.1-2v-3.1c0 1.100-3.200 2-7.1 2S0 11.7 0 10.6z" fill="#6b6b6b"/></svg>
<div class="abs" style="left:60.0px;top:327.0px;height:24px;line-height:24px;font-size:16px;color:#000;white-space:nowrap;letter-spacing:.15px;">mysql</div>
<svg width="14.2" height="16" viewBox="0 0 14.2 16" style="left:39.0px;top:353.9px"><ellipse cx="7.1" cy="2" rx="7.1" ry="2" fill="#6b6b6b"/><path d="M0 2.8v3.1c0 1.100 3.200 2 7.1 2s7.1-.9 7.1-2v-3.1c0 1.100-3.200 2-7.1 2S0 3.9 0 2.8z" fill="#6b6b6b"/><path d="M0 6.7v3.1c0 1.100 3.200 2 7.1 2s7.1-.9 7.1-2v-3.1c0 1.100-3.200 2-7.1 2S0 7.800000000000001 0 6.7z" fill="#6b6b6b"/><path d="M0 10.6v3.1c0 1.100 3.200 2 7.1 2s7.1-.9 7.1-2v-3.1c0 1.100-3.200 2-7.1 2S0 11.7 0 10.6z" fill="#6b6b6b"/></svg>
<div class="abs" style="left:60.0px;top:351.0px;height:24px;line-height:24px;font-size:16px;color:#000;white-space:nowrap;letter-spacing:.15px;">performance_schema</div>
<svg width="14.2" height="16" viewBox="0 0 14.2 16" style="left:39.0px;top:377.9px"><ellipse cx="7.1" cy="2" rx="7.1" ry="2" fill="#6b6b6b"/><path d="M0 2.8v3.1c0 1.100 3.200 2 7.1 2s7.1-.9 7.1-2v-3.1c0 1.100-3.200 2-7.1 2S0 3.9 0 2.8z" fill="#6b6b6b"/><path d="M0 6.7v3.1c0 1.100 3.200 2 7.1 2s7.1-.9 7.1-2v-3.1c0 1.100-3.200 2-7.1 2S0 7.800000000000001 0 6.7z" fill="#6b6b6b"/><path d="M0 10.6v3.1c0 1.100 3.200 2 7.1 2s7.1-.9 7.1-2v-3.1c0 1.100-3.200 2-7.1 2S0 11.7 0 10.6z" fill="#6b6b6b"/></svg>
<div class="abs" style="left:60.0px;top:375.0px;height:24px;line-height:24px;font-size:16px;color:#000;white-space:nowrap;letter-spacing:.15px;">ssmdwyglxtaeb6</div>
<svg width="14.2" height="16" viewBox="0 0 14.2 16" style="left:39.0px;top:401.9px"><ellipse cx="7.1" cy="2" rx="7.1" ry="2" fill="#6b6b6b"/><path d="M0 2.8v3.1c0 1.100 3.200 2 7.1 2s7.1-.9 7.1-2v-3.1c0 1.100-3.200 2-7.1 2S0 3.9 0 2.8z" fill="#6b6b6b"/><path d="M0 6.7v3.1c0 1.100 3.200 2 7.1 2s7.1-.9 7.1-2v-3.1c0 1.100-3.200 2-7.1 2S0 7.800000000000001 0 6.7z" fill="#6b6b6b"/><path d="M0 10.6v3.1c0 1.100 3.200 2 7.1 2s7.1-.9 7.1-2v-3.1c0 1.100-3.200 2-7.1 2S0 11.7 0 10.6z" fill="#6b6b6b"/></svg>
<div class="abs" style="left:60.0px;top:399.0px;height:24px;line-height:24px;font-size:16px;color:#000;white-space:nowrap;letter-spacing:.15px;">ssmgdqznoaxthsg8684b9</div>
<svg width="14.2" height="16" viewBox="0 0 14.2 16" style="left:39.0px;top:425.9px"><ellipse cx="7.1" cy="2" rx="7.1" ry="2" fill="#6b6b6b"/><path d="M0 2.8v3.1c0 1.100 3.200 2 7.1 2s7.1-.9 7.1-2v-3.1c0 1.100-3.200 2-7.1 2S0 3.9 0 2.8z" fill="#6b6b6b"/><path d="M0 6.7v3.1c0 1.100 3.200 2 7.1 2s7.1-.9 7.1-2v-3.1c0 1.100-3.200 2-7.1 2S0 7.800000000000001 0 6.7z" fill="#6b6b6b"/><path d="M0 10.6v3.1c0 1.100 3.200 2 7.1 2s7.1-.9 7.1-2v-3.1c0 1.100-3.200 2-7.1 2S0 11.7 0 10.6z" fill="#6b6b6b"/></svg>
<div class="abs" style="left:60.0px;top:423.0px;height:24px;line-height:24px;font-size:16px;color:#000;white-space:nowrap;letter-spacing:.15px;">sys</div>
<svg width="7" height="11" viewBox="0 0 7 11" style="left:38.9px;top:212.5px"><path d="M.8 .8l4.700 4.700L.8 10.200" fill="none" stroke="#8c8c8c" stroke-width="1.400"/></svg>
<div class="abs" style="left:77.0px;top:206.5px;height:24px;line-height:24px;font-size:15px;color:#000;white-space:nowrap;">表</div>
<svg width="7" height="11" viewBox="0 0 7 11" style="left:38.9px;top:236.5px"><path d="M.8 .8l4.700 4.700L.8 10.200" fill="none" stroke="#8c8c8c" stroke-width="1.400"/></svg>
<div class="abs" style="left:77.0px;top:230.5px;height:24px;line-height:24px;font-size:15px;color:#000;white-space:nowrap;">视图</div>
<svg width="7" height="11" viewBox="0 0 7 11" style="left:38.9px;top:260.5px"><path d="M.8 .8l4.700 4.700L.8 10.200" fill="none" stroke="#8c8c8c" stroke-width="1.400"/></svg>
<div class="abs" style="left:77.0px;top:254.5px;height:24px;line-height:24px;font-size:15px;color:#000;white-space:nowrap;">函数</div>
<svg width="7" height="11" viewBox="0 0 7 11" style="left:38.9px;top:284.5px"><path d="M.8 .8l4.700 4.700L.8 10.200" fill="none" stroke="#8c8c8c" stroke-width="1.400"/></svg>
<div class="abs" style="left:77.0px;top:278.5px;height:24px;line-height:24px;font-size:15px;color:#000;white-space:nowrap;">查询</div>
<svg width="7" height="11" viewBox="0 0 7 11" style="left:38.9px;top:308.5px"><path d="M.8 .8l4.700 4.700L.8 10.200" fill="none" stroke="#8c8c8c" stroke-width="1.400"/></svg>
<div class="abs" style="left:77.0px;top:302.5px;height:24px;line-height:24px;font-size:15px;color:#000;white-space:nowrap;">备份</div>
<svg width="15.7" height="15.3" viewBox="0 0 15.7 15.3" style="left:55.0px;top:210.3px"><rect x="0" y="0" width="15.7" height="15.3" rx="1" fill="#fff"/><path d="M0 1Q0 0 1 0H14.7Q15.7 0 15.7 1V4H0z" fill="#3b82c0"/><rect x="0.5" y="0.5" width="14.7" height="14.3" rx="1" fill="none" stroke="#3b82c0" stroke-width="1"/><path d="M0 7.8H15.7M0 11.5H15.7M5.2 4V15.3M10.5 4V15.3" stroke="#5a9bd8" stroke-width="0.9" fill="none"/></svg>
<svg width="17" height="16" viewBox="0 0 17 16" style="left:55.0px;top:234.0px"><rect x="0" y="0" width="14" height="11.5" rx="1" fill="#fff"/><path d="M0 1Q0 0 1 0H13Q14 0 14 1V3.2H0z" fill="#3b82c0"/><rect x="0.5" y="0.5" width="13" height="10.5" rx="1" fill="none" stroke="#3b82c0" stroke-width="1"/><path d="M0 6.0H14M0 8.7H14M4.7 3.2V11.5M9.3 3.2V11.5" stroke="#6ea6d6" stroke-width="0.9" fill="none"/><rect x="1.2" y="8.6" width="15" height="7" fill="#fff"/><circle cx="6.4" cy="12.7" r="2.6" fill="#fff" stroke="#4a4a4a" stroke-width="1.2"/><circle cx="12.7" cy="12.7" r="2.6" fill="#fff" stroke="#4a4a4a" stroke-width="1.2"/><path d="M8.8 12.2q.8-.6 1.600 0" stroke="#4a4a4a" fill="none"/></svg>
<svg width="20" height="20" viewBox="0 0 20 20" style="left:54.0px;top:256.0px"><text x="0.5" y="14.8" font-family="Liberation Serif,serif" font-style="italic" font-size="19.5" fill="#3f7fba">f</text><text x="8.6" y="16.6" font-family="Liberation Serif,serif" font-style="italic" font-size="13.5" fill="#3f7fba">x</text></svg>
<svg width="10.9" height="11.4" viewBox="0 0 10.9 11.4" style="left:60.1px;top:282.0px"><rect x="0" y="0" width="10.9" height="11.4" rx="1" fill="#fff"/><path d="M0 1Q0 0 1 0H9.9Q10.9 0 10.9 1V3H0z" fill="#d95f43"/><rect x="0.5" y="0.5" width="9.9" height="10.4" rx="1" fill="none" stroke="#d95f43" stroke-width="1"/><path d="M0 5.8H10.9M0 8.6H10.9M3.6 3V11.4M7.3 3V11.4" stroke="#e9957f" stroke-width="0.9" fill="none"/></svg>
<svg width="11" height="11.7" viewBox="0 0 11 11.7" style="left:55.0px;top:286.0px"><rect x="-.5" y="-.8" width="12.3" height="13" fill="#fff"/><rect x="0" y="0" width="11" height="11.7" rx="1" fill="#fff"/><path d="M0 1Q0 0 1 0H10Q11 0 11 1V3H0z" fill="#3b82c0"/><rect x="0.5" y="0.5" width="10" height="10.7" rx="1" fill="none" stroke="#3b82c0" stroke-width="1"/><path d="M0 5.9H11M0 8.8H11M3.7 3V11.7M7.3 3V11.7" stroke="#6ea6d6" stroke-width="0.9" fill="none"/></svg>
<svg width="13" height="15.5" viewBox="0 0 13 15.5" style="left:56.1px;top:306.1px"><rect width="12.9" height="15.4" rx="1.8" fill="#555"/><rect width="12.9" height="12.6" rx="1.8" fill="#979797"/><path d="M4.1 7.1a2.700 2.700 0 1 0 .9-2.300" fill="none" stroke="#fff" stroke-width="1.100"/><path d="M3.100 3.400l.4 2.900 2.600-.9z" fill="#fff"/></svg>
<div class="abs " style="left:254.0px;top:134.0px;width:500.0px;height:440.0px;background:#fff"></div>
<div class="abs " style="left:254.0px;top:134.0px;width:394.0px;height:31.0px;background:#f0f0f0"></div>
<div class="abs " style="left:254.0px;top:134.0px;width:86.5px;height:30.5px;background:#f8f8f8;border-right:1px solid #c4c4c4;border-bottom:1px solid #c4c4c4;box-sizing:border-box"></div>
<div class="abs" style="left:282.0px;top:137.5px;height:24px;line-height:24px;font-size:15px;color:#9a9a9a;white-space:nowrap;">对象</div>
<div class="abs " style="left:647.3px;top:134.0px;width:1.2px;height:31.0px;background:#b4b4b4"></div>
<div class="abs " style="left:647.3px;top:163.6px;width:110.0px;height:1.2px;background:#b4b4b4"></div>
<svg width="16.4" height="16" viewBox="0 0 16.4 16" style="left:344.8px;top:139.7px"><rect x="0" y="0" width="16.4" height="16" rx="1" fill="#fff"/><path d="M0 1Q0 0 1 0H15.399999999999999Q16.4 0 16.4 1V4.0H0z" fill="#3b82c0"/><rect x="0.5" y="0.5" width="15.399999999999999" height="15" rx="1" fill="none" stroke="#3b82c0" stroke-width="1"/><path d="M0 8.0H16.4M0 12.0H16.4M5.5 4.0V16M10.9 4.0V16" stroke="#6ea6d6" stroke-width="0.9" fill="none"/></svg>
<div class="abs" style="left:365.5px;top:137.8px;height:24px;line-height:24px;font-size:16px;color:#000;white-space:nowrap;">user @mybatis (localhost) - 表</div>
<div class="abs " style="left:254.0px;top:164.8px;width:394.0px;height:1.0px;background:#f0f0f0"></div>
<div class="abs " style="left:254.0px;top:165.0px;width:500.0px;height:34.7px;background:#f0f0f0"></div>
<svg width="16" height="17" viewBox="0 0 16 17" style="left:259.5px;top:176.5px"><g fill="#fff" stroke="#8a8a8a" stroke-width="1.100"><path d="M1 3v9.500c0 1.400 2.700 2.500 6 2.500s6-1.100 6-2.500V3"/><path d="M1 6.200c0 1.400 2.700 2.500 6 2.500s6-1.100 6-2.500M1 9.400c0 1.400 2.700 2.500 6 2.500s6-1.100 6-2.500"/><ellipse cx="7" cy="3" rx="6" ry="2.400"/></g><path d="M8.200 8.500l7.300 4.200-7.300 4.200z" fill="#38b34a" stroke="#f0f0f0" stroke-width=".6"/></svg>
<div class="abs" style="left:278.7px;top:173.8px;height:24px;line-height:24px;font-size:15px;color:#000;white-space:nowrap;">开始事务</div>
<div class="abs " style="left:351.0px;top:172.0px;width:1.2px;height:26.0px;background:#dcdcdc"></div>
<svg width="14" height="16.5" viewBox="0 0 14 16.5" style="left:363.6px;top:177.0px"><path d="M.6 .6h8.200l4.400 4.400v10.800H.6z" fill="#fff" stroke="#777" stroke-width="1.200"/><path d="M8.800 .6v4.400h4.400" fill="none" stroke="#777" stroke-width="1.100"/><path d="M3 7.200h5M3 9.700h7.500M3 12.200h7.500" stroke="#4a90d9" stroke-width="1.100"/></svg>
<div class="abs" style="left:382.8px;top:173.8px;height:24px;line-height:24px;font-size:15px;color:#000;white-space:nowrap;">文本</div>
<svg width="6" height="4" viewBox="0 0 6 4" style="left:420.5px;top:183.8px"><path d="M0 0h6L3 3.400z" fill="#111"/></svg>
<svg width="17" height="16.5" viewBox="0 0 17 16.5" style="left:432.5px;top:177.0px"><path d="M0 0h16.800v1.800H0z" fill="#7db8ea"/><path d="M.8 3h15.200L10.500 9.500V16L6.300 13.500V9.500z" fill="#4f9fe6"/></svg>
<div class="abs" style="left:453.3px;top:173.8px;height:24px;line-height:24px;font-size:15px;color:#000;white-space:nowrap;">筛选</div>
<svg width="17" height="17.5" viewBox="0 0 17 17.5" style="left:492.5px;top:176.5px"><path d="M4 0v15M.6 11.200L4 15.200l3.400-4" fill="none" stroke="#4f9fe6" stroke-width="1.900"/><path d="M9.500 1.200h7M9.500 5.500h7M9.500 9.800h7M9.500 14.100h7" stroke="#8a8a8a" stroke-width="1.100"/></svg>
<div class="abs" style="left:512.5px;top:173.8px;height:24px;line-height:24px;font-size:15px;color:#000;white-space:nowrap;">排序</div>
<div class="abs " style="left:554.0px;top:172.0px;width:1.2px;height:26.0px;background:#dcdcdc"></div>
<svg width="17" height="16" viewBox="0 0 17 16" style="left:565.7px;top:177.1px"><rect x="0" y="0" width="14.3" height="13.6" rx="1" fill="#fff"/><path d="M0 1Q0 0 1 0H13.3Q14.3 0 14.3 1V3.6H0z" fill="#2f6fa8"/><rect x="0.5" y="0.5" width="13.3" height="12.6" rx="1" fill="none" stroke="#2f6fa8" stroke-width="1"/><path d="M0 6.9H14.3M0 10.3H14.3M4.8 3.6V13.6M9.5 3.6V13.6" stroke="#6aa3d8" stroke-width="0.9" fill="none"/><rect x="7.500" y="7.500" width="10" height="9" fill="#f0f0f0"/><path d="M16.500 15.300c0-3.300-2-4.800-4.800-4.800v-2.300l-4 3.700 4 3.700v-2.300c2 0 3.400.5 4.800 2z" fill="#35a84a"/></svg>
<div class="abs" style="left:586.5px;top:173.8px;height:24px;line-height:24px;font-size:15px;color:#000;white-space:nowrap;">导入</div>
<svg width="17" height="16" viewBox="0 0 17 16" style="left:625.0px;top:177.1px"><rect x="0" y="0" width="14.3" height="13.6" rx="1" fill="#fff"/><path d="M0 1Q0 0 1 0H13.3Q14.3 0 14.3 1V3.6H0z" fill="#2f6fa8"/><rect x="0.5" y="0.5" width="13.3" height="12.6" rx="1" fill="none" stroke="#2f6fa8" stroke-width="1"/><path d="M0 6.9H14.3M0 10.3H14.3M4.8 3.6V13.6M9.5 3.6V13.6" stroke="#6aa3d8" stroke-width="0.9" fill="none"/><rect x="7.500" y="7.500" width="10" height="9" fill="#f0f0f0"/><path d="M7.800 8.500c0 3.300 2 4.800 4.800 4.800v2.300l4-3.700-4-3.700v2.300c-2 0-3.400-.5-4.800-2z" fill="#f0932b"/></svg>
<div class="abs" style="left:645.5px;top:173.8px;height:24px;line-height:24px;font-size:15px;color:#000;white-space:nowrap;">导出</div>
<div class="abs " style="left:267.4px;top:200.0px;width:45.2px;height:24.5px;background:#d9e8f7"></div>
<div class="abs " style="left:254.0px;top:275.0px;width:13.4px;height:25.0px;background:#d9e8f7"></div>
<div class="abs " style="left:267.4px;top:275.0px;width:206.0px;height:25.0px;background:#f7f7f7"></div>
<div class="abs " style="left:254.0px;top:224.1px;width:219.4px;height:1.1px;background:#e2e2e2"></div>
<div class="abs " style="left:254.0px;top:249.1px;width:219.4px;height:1.1px;background:#e2e2e2"></div>
<div class="abs " style="left:254.0px;top:274.1px;width:219.4px;height:1.1px;background:#e2e2e2"></div>
<div class="abs " style="left:254.0px;top:299.1px;width:219.4px;height:1.1px;background:#e2e2e2"></div>
<div class="abs " style="left:267.0px;top:200.0px;width:1.1px;height:100.0px;background:#e2e2e2"></div>
<div class="abs " style="left:312.3px;top:200.0px;width:1.1px;height:100.0px;background:#e2e2e2"></div>
<div class="abs " style="left:388.1px;top:200.0px;width:1.1px;height:100.0px;background:#e2e2e2"></div>
<div class="abs " style="left:473.1px;top:200.0px;width:1.1px;height:100.0px;background:#e2e2e2"></div>
<div class="abs" style="left:270.5px;top:200.9px;height:24px;line-height:24px;font-size:16px;color:#000;white-space:nowrap;">id</div>
<div class="abs" style="left:315.5px;top:200.9px;height:24px;line-height:24px;font-size:16px;color:#000;white-space:nowrap;">name</div>
<div class="abs" style="left:391.5px;top:200.9px;height:24px;line-height:24px;font-size:16px;color:#000;white-space:nowrap;">pwd</div>
<div class="abs" style="left:267.4px;top:226.0px;height:24px;line-height:24px;font-size:16px;color:#000;white-space:nowrap;width:40.5px;text-align:right;">1</div>
<div class="abs" style="left:315.5px;top:226.0px;height:24px;line-height:24px;font-size:16px;color:#000;white-space:nowrap;">subei</div>
<div class="abs" style="left:392.0px;top:226.0px;height:24px;line-height:24px;font-size:16px;color:#000;white-space:nowrap;">123456</div>
<div class="abs" style="left:267.4px;top:251.0px;height:24px;line-height:24px;font-size:16px;color:#000;white-space:nowrap;width:40.5px;text-align:right;">2</div>
<div class="abs" style="left:314.8px;top:250.8px;height:24px;line-height:24px;font-size:15px;color:#000;white-space:nowrap;">哇哈哈</div>
<div class="abs" style="left:392.0px;top:251.0px;height:24px;line-height:24px;font-size:16px;color:#000;white-space:nowrap;">952741</div>
<div class="abs" style="left:267.4px;top:276.0px;height:24px;line-height:24px;font-size:16px;color:#000;white-space:nowrap;width:40.5px;text-align:right;">3</div>
<div class="abs" style="left:314.8px;top:275.8px;height:24px;line-height:24px;font-size:15px;color:#000;white-space:nowrap;">欣杰克</div>
<div class="abs" style="left:392.0px;top:276.0px;height:24px;line-height:24px;font-size:16px;color:#000;white-space:nowrap;">854362</div>
<svg width="6" height="11" viewBox="0 0 6 11" style="left:258.5px;top:281.5px"><path d="M0 0l5.500 5.500L0 11z" fill="#111"/></svg>
<div class="abs " style="left:251.2px;top:301.3px;width:223.8px;height:28.4px;border:2px solid #e8141f"></div>
</div>
</body></html>
